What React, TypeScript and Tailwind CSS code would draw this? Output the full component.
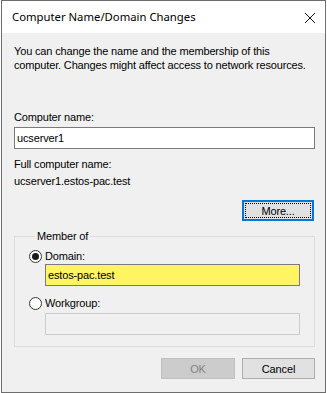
export default function App() {
    return (
        <div className="w-[327px] h-[393px] bg-white pl-px" style={{ fontFamily: '"Liberation Sans", Arial, sans-serif' }}>
            <div className="w-[325px] h-[393px] border border-[#6d6d6d] bg-[#f0f0f0] flex flex-col">
                {/* Title bar */}
                <div className="h-[32px] shrink-0 bg-white flex items-center justify-between pl-[10px] pr-[9px]">
                    <span className="text-[11.3px] text-black" style={{ fontFamily: '"Noto Sans", "Open Sans", sans-serif' }}>
                        Computer Name/Domain Changes
                    </span>
                    <svg width="12" height="12" viewBox="0 0 12 12" className="mt-px">
                        <path d="M1 1 L11 11 M11 1 L1 11" stroke="#111" strokeWidth="1" fill="none" />
                    </svg>
                </div>

                {/* Body */}
                <div className="flex flex-col pl-[12px] pr-[10px] pt-[11px] text-[11px] leading-[14px] tracking-[-0.15px] text-black">
                    <p>
                        You can change the name and the membership of this
                        <br />
                        computer. Changes might affect access to network resources.
                    </p>

                    <label className="mt-[38px]">Computer name:</label>
                    <div className="mt-[3px] h-[22px] border border-[#7a7a7a] bg-white flex items-center pl-[2px]">ucserver1</div>

                    <div className="mt-[8px]">Full computer name:</div>
                    <div className="mt-[3px]">ucserver1.estos-pac.test</div>

                    <div className="mt-[12px] flex justify-end pr-px">
                        <button className="w-[72px] h-[21px] border-2 border-[#0078d7] bg-[#e1e1e1] p-px">
                            <span className="flex h-full w-full items-center justify-center border border-dotted border-black">More...</span>
                        </button>
                    </div>

                    <fieldset className="mt-[8px] border border-[#dcdcdc] pl-[14px] pr-[14px] pb-[11px]">
                        <legend className="ml-[6px] px-[2px]">Member of</legend>

                        <div className="mt-[6px] flex items-center gap-[3px]">
                            <span className="w-[13px] h-[13px] rounded-full border border-[#333] bg-white flex items-center justify-center">
                                <span className="w-[7px] h-[7px] rounded-full bg-[#1a1a1a]" />
                            </span>
                            <span>Domain:</span>
                        </div>
                        <div className="ml-[16px] mt-[1px] h-[22px] border border-[#7a7a7a] bg-[#fff461] flex items-center pl-[2px]">estos-pac.test</div>

                        <div className="mt-[10px] flex items-center gap-[3px]">
                            <span className="w-[13px] h-[13px] rounded-full border border-[#333] bg-white" />
                            <span>Workgroup:</span>
                        </div>
                        <div className="ml-[16px] mt-[3px] h-[22px] border border-[#cccccc] bg-[#f0f0f0]" />
                    </fieldset>

                    <div className="mt-[11px] flex justify-end gap-[7px]">
                        <button className="w-[74px] h-[21px] border border-[#bfbfbf] bg-[#cccccc] text-[#838383]">OK</button>
                        <button className="w-[73px] h-[21px] border border-[#adadad] bg-[#e1e1e1]">Cancel</button>
                    </div>
                </div>
            </div>
        </div>
    );
}
